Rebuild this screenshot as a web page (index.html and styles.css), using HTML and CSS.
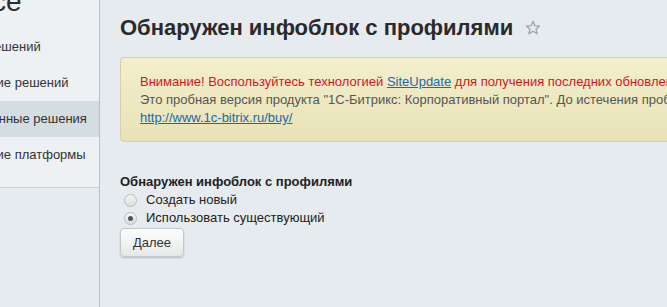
FILE: index.html
```html
<!DOCTYPE html>
<html lang="ru">
<head>
<meta charset="utf-8">
<link rel="stylesheet" href="styles.css">
</head>
<body>
<div class="page">
  <aside class="sidebar">
    <div class="side-panel">
      <div class="side-title">Marketplace</div>
      <ul class="menu">
        <li class="menu-item">Каталог решений</li>
        <li class="menu-item">Обновление решений</li>
        <li class="menu-item active">Установленные решения</li>
        <li class="menu-item">Обновление платформы</li>
      </ul>
    </div>
  </aside>
  <main class="content">
    <h1 class="title">Обнаружен инфоблок с профилями <span class="star"><svg width="16" height="16" viewBox="0 0 16 16"><path d="M8 1.3l1.9 4.4 4.7.4-3.6 3.1 1.1 4.6L8 11.3l-4.1 2.5 1.1-4.6L1.4 6.1l4.7-.4z" fill="none" stroke="#9aa3ad" stroke-width="1.3" stroke-linejoin="round"/></svg></span></h1>
    <div class="notice">
      <div class="notice-red">Внимание! Воспользуйтесь технологией <a href="#" class="link">SiteUpdate</a> для получения последних обновлений.</div>
      <div class="notice-gray">Это пробная версия продукта "1С-Битрикс: Корпоративный портал". До истечения пробного периода осталось 30 дней.</div>
      <div><a href="#" class="link">http://www.1c-bitrix.ru/buy/</a></div>
    </div>
    <form class="form">
      <div class="form-label">Обнаружен инфоблок с профилями</div>
      <label class="radio-row"><span class="radio"></span>Создать новый</label>
      <label class="radio-row"><span class="radio checked"></span>Использовать существующий</label>
      <button type="button" class="btn">Далее</button>
    </form>
  </main>
</div>
</body>
</html>
```

FILE: styles.css
```css
html, body {
  margin: 0;
  padding: 0;
}
body {
  background: #e5ebee;
  font-family: "Liberation Sans", Arial, sans-serif;
  color: #222;
  overflow: hidden;
}
.page {
  display: flex;
  height: 307px;
}
.sidebar {
  width: 99px;
  flex: none;
  border-right: 1px solid #b3c2cd;
  overflow: hidden;
}
.side-panel {
  background: #edf1f3;
  border-bottom: 1px solid #c9d3da;
  height: 199px;
}
.side-title {
  font-size: 28px;
  line-height: 28px;
  margin-top: -12px;
  margin-left: -131px;
  color: #2b2b2b;
  white-space: nowrap;
}
.menu {
  list-style: none;
  margin: 13px 0 0;
  padding: 0;
}
.menu-item {
  height: 36px;
  line-height: 36px;
  font-size: 13px;
  color: #333;
  white-space: nowrap;
  text-indent: -64px;
}
.menu-item.active {
  background: #d4dde2;
}
.content {
  flex: 1;
  padding: 14px 0 0 20px;
  min-width: 0;
}
.title {
  margin: 0;
  font-size: 22px;
  line-height: 28px;
  font-weight: bold;
  color: #2a2a2a;
  white-space: nowrap;
  display: flex;
  align-items: center;
}
.star {
  display: inline-flex;
  margin-left: 12px;
}
.notice {
  margin-top: 15px;
  width: 600px;
  border: 1px solid #d7d0a6;
  border-radius: 4px;
  background: linear-gradient(#f3efcd, #e8e2b6);
  padding: 14px 19px 15px;
  font-size: 13px;
  line-height: 18px;
  white-space: nowrap;
  box-sizing: border-box;
  height: 85px;
}
.notice-red {
  color: #d8141c;
  padding-top: 1px;
}
.notice-gray {
  color: #555;
}
.link {
  color: #2067b0;
  text-decoration: underline;
}
.form {
  margin-top: 31px;
  display: flex;
  flex-direction: column;
  align-items: flex-start;
  font-size: 13px;
}
.form-label {
  font-weight: bold;
  line-height: 18px;
}
.radio-row {
  display: flex;
  align-items: center;
  line-height: 18px;
  color: #222;
}
.radio {
  width: 11px;
  height: 11px;
  border-radius: 50%;
  border: 1px solid #b8bcbf;
  background: linear-gradient(#f6f6f6, #dcdcdc);
  margin: 0 9px 0 4px;
  position: relative;
}
.radio.checked::after {
  content: "";
  position: absolute;
  left: 3px;
  top: 3px;
  width: 5px;
  height: 5px;
  border-radius: 50%;
  background: #555;
}
.btn {
  margin-top: 1px;
  height: 29px;
  padding: 0 12px;
  font-family: "Liberation Sans", Arial, sans-serif;
  font-size: 13px;
  color: #333;
  border: 1px solid #c3c8cb;
  border-radius: 4px;
  background: linear-gradient(#fdfdfd, #e5e8e9);
  box-shadow: 0 1px 2px rgba(0,0,0,0.2);
}
```
